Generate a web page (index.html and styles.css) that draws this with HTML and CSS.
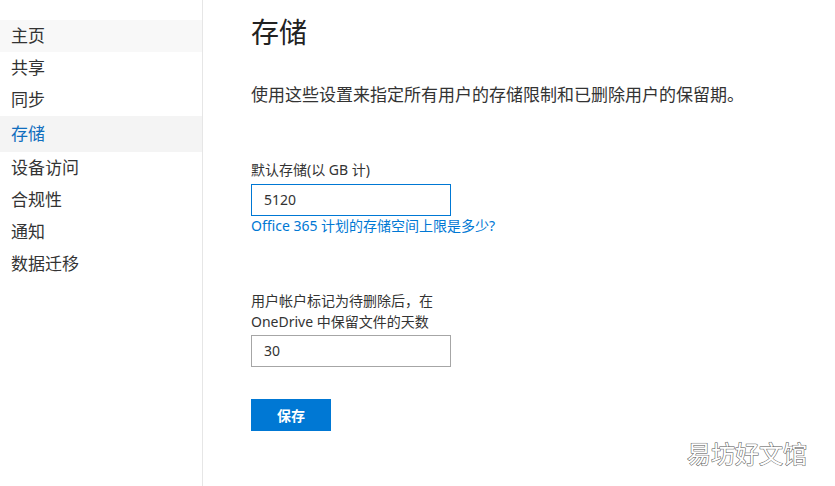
FILE: index.html
```html
<!DOCTYPE html>
<html lang="zh-CN">
<head>
<meta charset="utf-8">
<title>存储</title>
<link rel="stylesheet" href="styles.css">
</head>
<body>
<div class="page">
  <nav class="sidebar">
    <ul class="nav">
      <li class="nav-item hover">主页</li>
      <li class="nav-item">共享</li>
      <li class="nav-item">同步</li>
      <li class="nav-item selected">存储</li>
      <li class="nav-item">设备访问</li>
      <li class="nav-item">合规性</li>
      <li class="nav-item">通知</li>
      <li class="nav-item">数据迁移</li>
    </ul>
  </nav>
  <main class="main">
    <h1 class="title">存储</h1>
    <p class="desc">使用这些设置来指定所有用户的存储限制和已删除用户的保留期。</p>
    <div class="field field-first">
      <label class="label">默认存储(以 GB 计)</label>
      <div class="input focused">5120</div>
      <a class="link">Office 365 计划的存储空间上限是多少?</a>
    </div>
    <div class="field field-second">
      <label class="label label-multi">用户帐户标记为待删除后，在<br>OneDrive 中保留文件的天数</label>
      <div class="input input-second">30</div>
    </div>
    <button class="btn">保存</button>
  </main>
  <div class="watermark">易坊好文馆</div>
</div>
</body>
</html>
```

FILE: styles.css
```css
html, body {
  margin: 0;
  padding: 0;
  background: #ffffff;
}
body {
  font-family: "Segoe UI", "Noto Sans", "Noto Sans CJK SC", sans-serif;
  color: #333333;
}
.page {
  position: relative;
  display: flex;
  width: 835px;
  height: 486px;
  overflow: hidden;
}
.sidebar {
  width: 202px;
  flex: none;
  border-right: 1px solid #e6e6e6;
  box-sizing: content-box;
}
.nav {
  list-style: none;
  margin: 20px 0 0 0;
  padding: 0;
}
.nav-item {
  height: 32px;
  line-height: 32px;
  padding-left: 11px;
  font-size: 17px;
  color: #333333;
}
.nav-item.hover {
  background: #f8f8f8;
}
.nav-item.selected {
  height: 36px;
  line-height: 36px;
  background: #f4f4f4;
  color: #106ebe;
}
.main {
  flex: 1;
  padding: 14px 0 0 48px;
}
.title {
  margin: 0;
  font-size: 28px;
  line-height: 36px;
  font-weight: 400;
  color: #222222;
}
.desc {
  margin: 34px 0 0 0;
  font-size: 17px;
  line-height: 22px;
  color: #333333;
}
.field-first {
  margin-top: 54px;
}
.label {
  display: block;
  font-size: 14px;
  line-height: 20px;
  color: #333333;
}
.input {
  box-sizing: border-box;
  width: 200px;
  height: 32px;
  margin-top: 4px;
  padding-left: 12px;
  border: 1px solid #a6a6a6;
  font-size: 14px;
  line-height: 30px;
  color: #333333;
}
.input.focused {
  border-color: #0078d4;
}
.link {
  display: block;
  font-size: 14px;
  line-height: 20px;
  color: #0078d4;
}
.field-second {
  margin-top: 54px;
}
.label-multi {
  line-height: 21px;
}
.input-second {
  margin-top: 3px;
}
.btn {
  display: block;
  margin-top: 32px;
  width: 80px;
  height: 32px;
  border: none;
  padding: 0;
  background: #0078d4;
  color: #ffffff;
  font-family: inherit;
  font-size: 14px;
  font-weight: 700;
}
.watermark {
  position: absolute;
  right: 28px;
  top: 438px;
  font-size: 24px;
  line-height: 30px;
  color: #ffffff;
  font-family: "Noto Sans CJK SC", sans-serif;
  -webkit-text-stroke: 1px #555555;
  paint-order: stroke fill;
  text-shadow: 0 0 1px #888;
}
```
